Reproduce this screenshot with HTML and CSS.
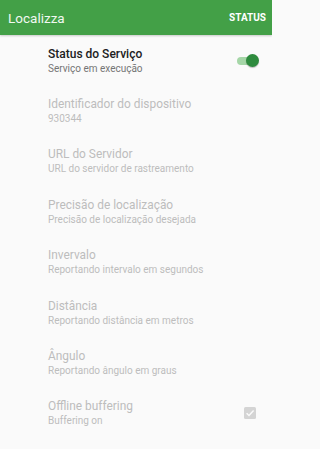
FILE: index.html
```html
<!DOCTYPE html>
<html lang="pt">
<head>
<meta charset="utf-8">
<link rel="stylesheet" href="styles.css">
</head>
<body>
<header class="appbar">
  <span class="appbar-title">Localizza</span>
  <span class="appbar-action">STATUS</span>
</header>
<main class="prefs">
  <div class="pref">
    <div class="pref-text">
      <div class="pref-title">Status do Serviço</div>
      <div class="pref-summary">Serviço em execução</div>
    </div>
    <div class="switch"><span class="switch-track"></span><span class="switch-thumb"></span></div>
  </div>
  <div class="pref disabled">
    <div class="pref-text">
      <div class="pref-title">Identificador do dispositivo</div>
      <div class="pref-summary">930344</div>
    </div>
  </div>
  <div class="pref disabled">
    <div class="pref-text">
      <div class="pref-title">URL do Servidor</div>
      <div class="pref-summary">URL do servidor de rastreamento</div>
    </div>
  </div>
  <div class="pref disabled">
    <div class="pref-text">
      <div class="pref-title">Precisão de localização</div>
      <div class="pref-summary">Precisão de localização desejada</div>
    </div>
  </div>
  <div class="pref disabled">
    <div class="pref-text">
      <div class="pref-title">Invervalo</div>
      <div class="pref-summary">Reportando intervalo em segundos</div>
    </div>
  </div>
  <div class="pref disabled">
    <div class="pref-text">
      <div class="pref-title">Distância</div>
      <div class="pref-summary">Reportando distância em metros</div>
    </div>
  </div>
  <div class="pref disabled">
    <div class="pref-text">
      <div class="pref-title">Ângulo</div>
      <div class="pref-summary">Reportando ângulo em graus</div>
    </div>
  </div>
  <div class="pref disabled">
    <div class="pref-text">
      <div class="pref-title">Offline buffering</div>
      <div class="pref-summary">Buffering on</div>
    </div>
    <div class="checkbox">
      <svg viewBox="0 0 12 12" width="12" height="12"><rect x="0" y="0" width="12" height="12" rx="1.5" fill="#d4d4d4"/><path d="M2.6 6.2 L5 8.5 L9.6 3.6" fill="none" stroke="#fafafa" stroke-width="1.5"/></svg>
    </div>
  </div>
</main>
</body>
</html>
```
FILE: styles.css
```css
html, body {
  margin: 0;
  padding: 0;
  background: #fafafa;
  font-family: Roboto, "Noto Sans", sans-serif;
}
body {
  width: 272px;
  height: 449px;
  overflow: hidden;
}
.appbar {
  height: 35px;
  background: #43a047;
  display: flex;
  align-items: center;
  justify-content: space-between;
  padding: 0 6px 0 8px;
  box-shadow: 0 1px 2px rgba(0,0,0,0.2);
  position: relative;
}
.appbar-title {
  color: #f1f8f1;
  font-size: 13.5px;
}
.appbar-action {
  color: #ffffff;
  font-size: 10px;
  font-weight: 700;
}
.prefs {
  padding-top: 0.5px;
}
.pref {
  height: 50.4px;
  display: flex;
  align-items: center;
  padding: 0 13px 0 48px;
}
.pref-text {
  flex: 1;
}
.pref-title {
  font-size: 12px;
  line-height: 16px;
  font-weight: 500;
  color: #212121;
}
.pref-summary {
  font-size: 10px;
  line-height: 14px;
  color: #757575;
}
.pref.disabled .pref-title {
  font-weight: 400;
  font-size: 11.9px;
  color: #bdbdbd;
}
.pref.disabled .pref-summary {
  color: #bdbdbd;
}
.switch {
  position: relative;
  width: 22px;
  height: 14px;
  margin-right: 1px;
}
.switch-track {
  position: absolute;
  left: 1px;
  top: 3px;
  width: 20px;
  height: 8px;
  border-radius: 4px;
  background: #a5d6a7;
}
.switch-thumb {
  position: absolute;
  right: -1px;
  top: 0;
  width: 13px;
  height: 13px;
  border-radius: 50%;
  background: #2e8b3e;
  box-shadow: 0 1px 1px rgba(0,0,0,0.25);
}
.checkbox {
  width: 12px;
  height: 12px;
  margin-right: 3px;
  display: flex;
}
```
